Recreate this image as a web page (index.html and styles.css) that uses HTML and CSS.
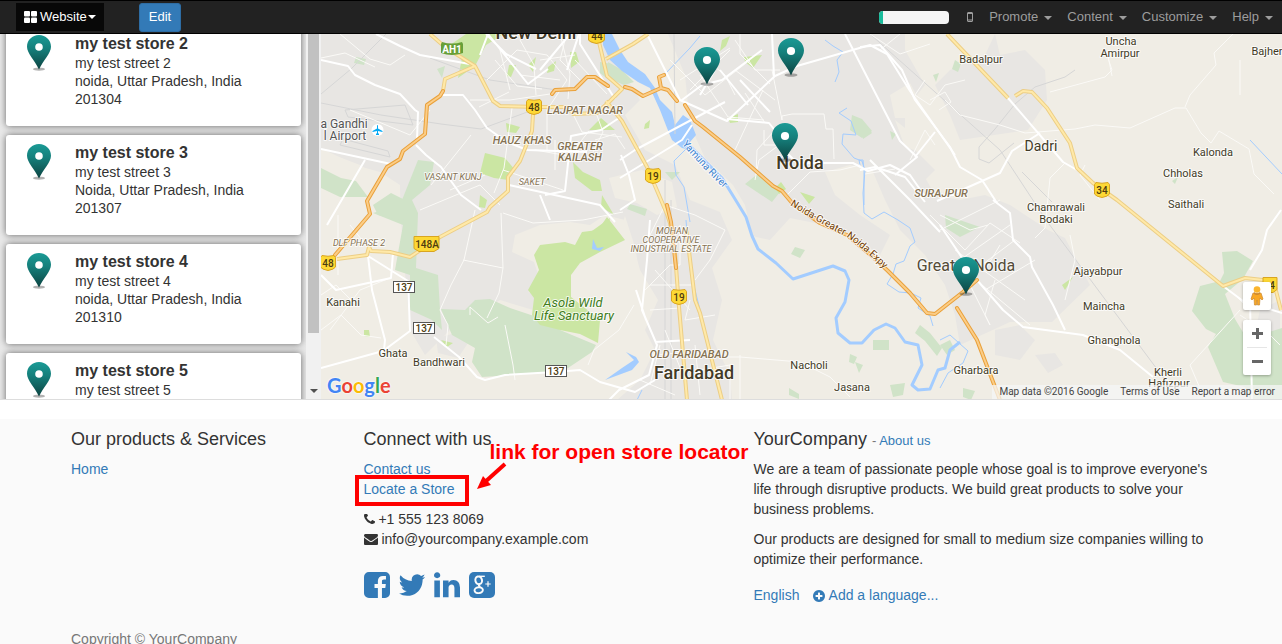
FILE: index.html
```html
<!DOCTYPE html>
<html lang="en">
<head>
<meta charset="utf-8">
<meta name="viewport" content="width=device-width, initial-scale=1">
<title>Store Locator | YourCompany</title>
<link rel="stylesheet" href="styles.css">
</head>
<body>
<svg class="sprite" aria-hidden="true">
  <defs>
    <linearGradient id="pin-fill" x1="0" y1="0" x2="0" y2="1">
      <stop offset="0" stop-color="#1a9a95"/><stop offset=".4" stop-color="#157f7b"/><stop offset="1" stop-color="#0c4341"/>
    </linearGradient>
    <symbol id="pin" viewBox="0 0 26 39">
      <ellipse cx="13" cy="37" rx="6.5" ry="1.7" fill="#000" opacity=".3"/>
      <path fill="url(#pin-fill)" d="M13 0C5.6 0 0 5.6 0 12.6 0 20 8.5 27 13 37.4 17.500 27 26 20 26 12.600 26 5.600 20.400 0 13 0z"/>
      <circle cx="13" cy="13" r="4.100" fill="#fff"/>
    </symbol>
    <symbol id="caret" viewBox="0 0 8 4"><path fill="currentColor" d="M0 0h8L4 4z"/></symbol>
  </defs>
</svg>

<header class="navbar">
  <button class="nav-site" type="button">
    <svg width="13" height="12" viewBox="0 0 13 12" aria-hidden="true"><g fill="#fff"><rect width="6" height="5.500" rx="1"/><rect x="7" width="6" height="5.500" rx="1"/><rect y="6.500" width="6" height="5.500" rx="1"/><rect x="7" y="6.500" width="6" height="5.500" rx="1"/></g></svg>
    <span>Website</span><svg class="caret" aria-hidden="true"><use href="#caret"/></svg>
  </button>
  <button class="nav-edit" type="button">Edit</button>
  <div class="progress" role="progressbar" aria-label="Setup progress" aria-valuenow="5"><div class="progress-bar" style="width:5%"></div></div>
  <button class="nav-item" type="button" aria-label="Mobile preview"><svg width="6" height="10" viewBox="0 0 6 10"><path fill="none" stroke="#9d9d9d" d="M1 .5h4q.5 0 .5.5v8q0 .5-.5.5H1q-.5 0-.5-.5V1q0-.5.5-.5zM.5 8h5M.5 1.500h5"/></svg></button>
  <nav class="nav-menu">
    <button class="nav-item" type="button">Promote<svg class="caret" aria-hidden="true"><use href="#caret"/></svg></button>
    <button class="nav-item" type="button">Content<svg class="caret" aria-hidden="true"><use href="#caret"/></svg></button>
    <button class="nav-item" type="button">Customize<svg class="caret" aria-hidden="true"><use href="#caret"/></svg></button>
    <button class="nav-item" type="button">Help<svg class="caret" aria-hidden="true"><use href="#caret"/></svg></button>
  </nav>
</header>

<main class="locator">
  <aside class="sidebar">
    <ul class="stores">
      <li class="store"><svg class="store-pin" aria-hidden="true"><use href="#pin"/></svg><div><h3>my test store 2</h3><p>my test street 2<br>noida, Uttar Pradesh, India<br>201304</p></div></li>
      <li class="store"><svg class="store-pin" aria-hidden="true"><use href="#pin"/></svg><div><h3>my test store 3</h3><p>my test street 3<br>Noida, Uttar Pradesh, India<br>201307</p></div></li>
      <li class="store"><svg class="store-pin" aria-hidden="true"><use href="#pin"/></svg><div><h3>my test store 4</h3><p>my test street 4<br>noida, Uttar Pradesh, India<br>201310</p></div></li>
      <li class="store"><svg class="store-pin" aria-hidden="true"><use href="#pin"/></svg><div><h3>my test store 5</h3><p>my test street 5</p></div></li>
    </ul>
    <div class="scrollbar" aria-hidden="true"><div class="thumb"></div><svg class="caret" viewBox="0 0 8 4"><use href="#caret"/></svg></div>
  </aside>

  <div class="map">
    <svg class="map-canvas" viewBox="321 34 961 365" preserveAspectRatio="xMinYMin slice" role="img" aria-label="Map of stores near Noida">
      <defs>
        <g id="highways">
          <path d="M475 66L445 79 443 91M430 34L445 47 475 66 493 101 500 106 540 107 567 107 573 114 597 113 610 101 622 89 607 76 599 42M533 114L532 131 520 161 508 177 508 191 490 207 487 212 440 237 413 255 410 257 390 252 371 251 369 247 367 255 337 259M606 59L633 44 648 34M606 101L622 121 647 167 667 214 670 223 675 253 679 307 687 400M686 228L688 243 695 300 700 313 722 400M947 34L1008 98M1015 96L1023 91 1032 92 1047 108 1070 143 1077 168 1093 183 1117 200 1223 286 1245 278 1263 280 1275 287 1281 310"/>
        </g>
        <g id="expressways">
          <path d="M443 91L440 96 427 105 425 134 403 151 400 159 387 167 367 201 370 214 335 255M552 94L555 90 575 89 587 77 595 77 608 86M625 87L632 89 643 96 661 88 668 90 677 101M664 75L659 77 661 88M685 105L695 121 703 127 740 157 773 186 782 191 793 204 820 223 847 235 873 257 888 271 910 293 927 313 935 314 963 292 977 280M957 308L977 340 1000 400M667 205L671 222 676 268"/>
        </g>
        <path id="expy-label" d="M790 205Q820 224 847 237 869 253 893 278"/>
        <path id="river-label" d="M682 144Q702 168 735 199"/>
        <symbol id="shield" viewBox="0 0 16 16"><path fill="#fdd835" stroke="#d9a521" d="M2 .5Q8 2 14 .5L15.500 2.500V12Q14 14.500 8 15.500 2 14.500 .5 12V2.500z"/></symbol>
      </defs>

      <rect class="land" x="321" y="34" width="961" height="366"/>
      <g class="urban">
        <path d="M321 34H606L625 75 640 100 625 115 645 150 675 165 690 200 720 212 732 240 712 268 722 300 713 340 730 375 732 400H617L640 380 655 350 645 330 658 300 640 270 632 240 625 220 605 215 590 225 570 222 540 225 515 235 512 252 534 262 540 280 528 292 570 310 560 318 500 300 450 330 425 355 410 330 400 215 400 185 380 172 355 165 321 148z"/>
        <path d="M668 34H905L905 50 925 85 905 110 905 140 935 170 915 190 880 170 850 165 825 172 835 195 860 215 890 235 880 255 840 228 790 218 770 240 752 236 745 205 733 185 705 158 690 125 685 75z"/>
        <path d="M995 34L1000 55 1025 50 1045 70 1047 100 1028 130 960 140 950 115 935 85 950 70 985 55z"/>
        <path d="M870 165L915 160 935 195 960 200 985 195 1010 205 1048 230 1065 238 1090 285 1052 322 1010 322 960 345 955 315 945 285 925 255 900 230 885 200z"/>
        <path d="M995 330L1020 325 1035 340 1020 360 995 355zM1035 355l20-2 8 12-15 8zM436 338l20-5 12 10-10 15-20-5zM1260 310l20-10v50l-25-18z"/>
      </g>
      <g class="farm">
        <path d="M625 216L605 275 572 272 571 297 601 312 596 345 640 310 636 250zM321 150L360 165 400 190 402 240 370 245 321 240zM642 170l30 12 5 25-20 8-20-12-22-5-6-20z"/>
        <path d="M642 34h20l10 22-5 18-15-12zM890 95l20-12 8 15-8 20-15 0zM895 120l15 12 10 20-15-5z"/>
      </g>
      <g class="forest">
        <path d="M373 213L400 205 418 160 434 162 430 185 412 200 418 213 416 268 438 275 440 310 442 330 432 320 410 310 410 275 395 270 403 225z"/>
        <path d="M441 309L465 310 475 300 490 299 510 308 552 322 560 330 596 345 592 352 565 370 515 375 482 377 472 362 475 348 452 335z"/>
        <path d="M321 168l20 10 15 3 12 16-28 0-19-9zM373 205l18-12 20 10-8 18-25-6z"/>
        <path d="M1222 252l15 -1 16 10-10 18-18 15 10 25 12 20 38 -12 v90l-30-5-10-25-22-5-15-35 8-13-10-5 -14-18 8-25 20-5 4-8z"/>
        <path d="M945 215l35 12-20 10-14-9zM852 115l10 4 10 12-10 7-12-8zM860 118l12 15-9 6zM795 247l10 3-5 8-9-4zM873 340h16v10h-16zM920 325l10 8 12 15-5 8-12-15-10-8zM890 385l15-2-2 12-10 2zM850 354l7 3-3 7-5-2zM855 362l8 3-4 8zM789 388l10 6v5l-10-4zM940 345l10-5 5 10-8 5zM963 388l12 3-4 9-8-3z"/>
        <path d="M600 62l12 2 12 12-14 5-10-8zM356 57l10 2-2 6-10-2zM437 69l8-3-3 12zM665 172l15 0-8 8zM630 204l17 5-2 7-18-7zM745 184l15-12 20 20-8 10zM1172 181l6-4-3 7zM890 131l6 3-4 6zM955 60l6 4-3 8-6-3zM933 75l6-2-3 9zM608 62l14 8 12 12-10 3-14-6z"/>
      </g>
      <g class="park">
        <path d="M466 34H504L486 45 475 66 458 78 462 58 450 45z"/>
        <path d="M485 153L505 158 515 170 508 180 494 178 480 173zM573 162L583 172 600 180 602 191 592 191 575 178zM509 65l7 0-5 12-4-1zM570 52h6l3 10-8 6zM548 67l8-6-2 10-7 2zM480 195l7 5-2 8-6-1zM506 123l14 4-4 6-9-1zM602 195l12 20-13-8zM615 130h-26l12 -12zM744 57l18-2-9 13-8-6zM722 40l8-4-4 10-6 5zM728 118l10-4v8l-8 1zM775 188l6-6 5 7-7 5zM800 192l15 5-6 7zM528 65l8-8-3 15zM610 218l-5 20 -20 -2zM1062 285l11-8-8 13zM645 124l5-4-1 8-5 1z"/>
        <path d="M607 217L625 240 600 252 580 263 571 275 571 297 600 320 598 343 580 334 560 330 540 325 532 315 534 298 528 290 539 270 534 255 540 245 565 242 575 245 582 232 598 230z"/>
        <path d="M441 340l12 3-6 4zM364 330l5 0 1 7-6-1z"/>
      </g>
      <g class="water">
        <path d="M603 34L612 34 620 50 628 62 645 74 655 88 660 100 672 112 675 125 683 115 690 120 696 135 690 142 690 150 682 148 672 140 667 128 660 110 650 88 638 82 622 71 610 60 603 45z"/>
        <path d="M593 239l4 9 7 -1-4 4-8-2zM636 398l1-1zM605 380L622 368 634 360 626 352 636 357 639 362 632 370z"/>
        <path class="river" d="M684 142L690 146 722 178 735 199 746 217 752 236 758 249 776 263 793 279 833 266 845 271 849 280 845 302 836 318 838 333 850 343 862 343 874 330 886 324 895 328 905 342 918 345 922 365 912 385 918 390 930 389 938 370 945 368 950 350 960 342"/>
        <path class="stream" d="M700 36L690 48 665 74M690 145l-16 16 2 14 8 12 6 35M686 220l4 50 15 60 14 60M847 108l-8 5 12 8 5 14-13-1-1 10 12 14 8 3 3 10-2 22 1 20 8 6 12-7 14 8 12 8 5 14-5 4-6 15-8 3-3 10-6 10 12 8 12 1 10 5-3 10 12 8 3 10M835 82l4-10-2-12 6-8-10-6-8-6M1250 140l32 34M637 400l5-10M940 340l10-5 18 16-5 12-15 10-8 15M860 165l-1-5 4 0 1 10 0 35"/>
      </g>
      <g class="rail">
        <path d="M870 34L1000 150 1046 220 1180 400M1075 70l-10 7-30 10-20 17-20 25-16 18 0 12 10 4 25-20M321 94l30-25 40-40M321 103l60 12 60 9 40 5 60-22M674 34l1 100M785 200M665 180v220M671 200v200M1022 172l30 30M430 58l60 22 80 12M345 110l60 -5 8 20-65-8zM340 145l50 12-2-6-45-12z"/>
      </g>
      <g class="lane">
        <path d="M321 58l24 -5 30 14M340 34l30 25 20 6 15-10M350 110l60 25 20 -25M471 135l-40 50M512 108l-8 60-10 25M503 170l60 20M495 60l22 26 25 3M487 80l30-30 30 5 20 25 -20 30 0 40M520 40l14 25 2 30M565 40l-5 20 20 20M560 34l10 40-2 25M575 60l32 34M535 150l34 6 20 -25M479 107l30-15M470 100l40 0 40-6M540 60l35-5M520 75l40 5M500 50l10 40M572 112l10 20 40 5M555 140l0 30M595 110l8 22-10 20M595 140l20 -6 10 15M420 210l60 -25 20 20M450 190l35 -15M475 210l-11 50-13 25-11 25 8 15 -2 20M463 260l40 8 -4 25-12 25M503 268l-2-55M503 213l30 10 50-3 40-8M470 315l0-8 18 16 10 -6M505 325l8 40 2 15M321 295l15-10 20 20M321 330l20-15 20 20 20 3M338 215v60M350 225l20 25M330 330l30 -40 30-12M588 365l6-15 25-20 15-25"/>
        <path d="M670 60l35 35 45 -35M700 75l28 42 36 3M690 90l40-40M680 80l50-32M740 34v20l30 30M772 70l10 50 0 -4 10-2 32 0 2 15 7 0 1 30M764 130v15l15 0-20 15-4 20M763 90l-28 60M735 40l20 30 25 0M735 70l40 30M785 170M745 93l20 30M700 55l25 20 10 20M775 130l-18 20 -1 25M860 165l-20 5-30 2-25 25M895 169l-30 5M880 50l20 -16M870 34l30 20 30 -10M935 145l-10 -15 -15 30M930 100l15-8 6 10-12 8M925 80l-10 15 15 10 15-20 20-5M945 100l15 15 40 10 25 8 50-4 20-4 35 3 45-20 11 0 15 25 10 10 8-12 30 18 5 25 20 20M1112 76l-5-25M1050 92l55-15 7-7-5-15M1185 107l5-12 26-30-2-12 20-20M1240 60v35M1065 163l-15 15-5 50-10 10"/>
        <path d="M940 230l60-30M930 215l35 35 25-27 30 20M955 250l70 50M960 260l50-35M975 270l40-30M985 290l50-30M970 275l60 50M950 265l20 20 20 40M995 280l-10 35 5 10M1000 245l-15 25M940 215l30 15 18 -5M1070 235l5 25-10 40M1190 365l50-55M1190 365l15 35M1240 315l30 20 10 10M1250 310l-15-15M1100 200l-20 -25 5-10M650 235l15-30 30 10 30 15-15 30-15 20M650 285l45 0M645 290l25-25 10 0 0 -40M650 310l30-2M690 300l-5 20 30-5M655 355l35-3 30 5 20 0 60 5 30 15 20 20M740 355v45M700 370l30 -5M640 380l35 15M660 345l-10 40M665 330l20 50M695 345l5 50M730 365v35M655 270l35 40"/>
      </g>
      <g class="street">
        <path d="M321 60L348 66 355 75 375 85 400 94 415 110 418 112 417 140M376 34L400 46 420 55 475 65M443 95l20 0 12 15 12 18 20 14 20 8 60 2M321 149l70 15M365 160l-38 65M416 145l10 10 15 12 20 28 20 15M509 185L600 205 615 222M545 195l20-4 6-55 30-6 18-12M580 34v10l35 55M567 70l15 -45M540 70l30-36M480 55l8-21 40 50 20-15M486 34l20 20 30 15M540 195l10 25"/>
        <path d="M368 256L372 290 385 340 384 350M368 256l40 25 2 50-27 20-62 17M321 275l15 15 55-12 2-25M434 337l25 20 18 20 8 3 20-5 50-3 25-2 20 12 35 10 20-12M650 220l-3 40-5 50 15 35-8 30-30 15-20 20M620 210l15 -10 -6-25-8-20M620 160l15-10 90-48M655 342l35-2M636 290l10 30"/>
        <path d="M647 34L680 100 727 121 775 76 797 66 870 45 887 54 910 91 955 155M727 119l42 4 8 10 10 20 10 10 56 0 15 8 22-6 20 10 14 20 30 0M692 125l-10 15-62 38M682 100l20-15 20-5 40 -30M700 95l15-25M720 70l28 35M740 80l30 32M774 76l-2 -42"/>
        <path d="M845 34L900 141 917 157 895 175M860 47L880 45 902 70 915 100 950 147 960 167 982 180 997 203M1008 98L1063 162 1077 170M1040 133l-28 18-12 22-18 8-45 20M860 170l15-3 30 10 20 25M915 157l20 -25"/>
        <path class="main" d="M993 200L1010 213 1013 240 1030 257 1032 267 1053 305 1065 330M940 225l37 55 26 30 20 17 60 8 37 15 33 27M1223 286l20 15 39 12M1281 210l-14 20-5 20-12 20M1250 300l2 100M870 160l40 40 30 32"/>
      </g>
      <use class="hw-case" href="#highways"/><use class="hw" href="#highways"/>
      <use class="ex-case" href="#expressways"/><use class="ex" href="#expressways"/>

      <g class="signs">
        <path fill="#689f38" d="M442 42q10 3 20 0l1 2v9q-11 4-22 0v-9z"/><text class="sign-light" x="452" y="53">AH1</text>
        <use href="#shield" x="588" y="27" width="17" height="17"/><text x="597" y="40">44</text>
        <use href="#shield" x="526" y="99" width="16" height="16"/><text x="534" y="111">48</text>
        <use href="#shield" x="645" y="168" width="16" height="16"/><text x="653" y="180">19</text>
        <use href="#shield" x="671" y="289" width="16" height="16"/><text x="679" y="301">19</text>
        <use href="#shield" x="1094" y="182" width="16" height="16"/><text x="1102" y="194">34</text>
        <use href="#shield" x="320" y="255" width="16" height="16"/><text x="328" y="267">48</text>
        <path fill="#fdd835" stroke="#d9a521" d="M414 236.500h25v12l-5 3h-15l-5-3zM1263 277.500h14v12l-4 3h-10z"/><text x="427" y="248">148A</text><text x="1272" y="289">4</text>
        <g fill="#fff" stroke="#555"><rect x="393.500" y="281.500" width="21" height="11"/><rect x="413.500" y="322.500" width="21" height="11"/><rect x="545.500" y="365.500" width="21" height="11"/></g>
        <text x="404" y="291">137</text><text x="424" y="332">137</text><text x="556" y="375">137</text>
      </g>

      <g class="labels">
        <text class="city" x="536" y="39">New Delhi</text><text class="city" x="800" y="169">Noida</text><text class="city" x="694" y="379">Faridabad</text>
        <text class="suburb-city" x="966" y="271">Greater Noida</text><text class="town" x="1041" y="151">Dadri</text>
        <text class="place" x="344" y="128">a Gandhi</text><text class="place" x="345" y="140">l Airport</text>
        <g class="village"><text x="981" y="63">Badalpur</text><text x="1121" y="45">Uncha</text><text x="1120" y="57">Amirpur</text><text x="1267" y="55">Bajher</text><text x="1213" y="156">Kalonda</text><text x="1183" y="177">Chholas</text><text x="1186" y="208">Saithali</text><text x="1056" y="211">Chamrawali</text><text x="1056" y="223">Bodaki</text><text x="1098" y="275">Ajayabpur</text><text x="1104" y="310">Maincha</text><text x="1114" y="344">Ghanghola</text><text x="976" y="374">Gharbara</text><text x="1168" y="376">Kherli</text><text x="1169" y="387">Hafizpur</text><text x="809" y="369">Nacholi</text><text x="852" y="391">Jasana</text><text x="343" y="306">Kanahi</text><text x="393" y="357">Ghata</text><text x="439" y="366">Bandhwari</text></g>
        <g class="area"><text x="585" y="114">LAJPAT NAGAR</text><text x="522" y="144">HAUZ KHAS</text><text x="580" y="150">GREATER</text><text x="580" y="161">KAILASH</text><text x="941" y="197">SURAJPUR</text><text x="689" y="358">OLD FARIDABAD</text></g>
        <g class="area small"><text x="453" y="180">VASANT KUNJ</text><text x="532" y="185">SAKET</text><text x="359" y="246">DLF PHASE 2</text><text x="672" y="234">MOHAN</text><text x="671" y="243">COOPERATIVE</text><text x="671" y="252">INDUSTRIAL ESTATE</text></g>
        <g class="reserve"><text x="573" y="307">Asola Wild</text><text x="574" y="320">Life Sanctuary</text></g>
        <text class="river-name"><textPath href="#river-label">Yamuna River</textPath></text>
        <text class="road-name"><textPath href="#expy-label">Noida-Greater Noida Expy</textPath></text>
      </g>
      <circle cx="377.500" cy="130" r="6" fill="#fff"/><path fill="#03a9f4" d="M377 125.500q.5-1 1 0v3l4.500 2.500v1l-4.500-1v2l1 1v1h-3v-1l1-1v-2l-4.500 1v-1l4.500-2.500z"/>

      <use href="#pin" x="694" y="47" width="26" height="39"/><use href="#pin" x="778" y="38" width="26" height="39"/><use href="#pin" x="772" y="123" width="26" height="39"/><use href="#pin" x="953" y="257" width="26" height="39"/>
    </svg>
    <a class="google" href="#" aria-label="Google"><span class="g-blue">G</span><span class="g-red">o</span><span class="g-yellow">o</span><span class="g-blue">g</span><span class="g-green">l</span><span class="g-red">e</span></a>
    <div class="map-controls">
      <button class="pegman" type="button" aria-label="Street View"><svg width="14" height="20" viewBox="0 0 14 20"><circle cx="7" cy="3.500" r="3.300" fill="#fbb52d"/><path fill="#f9a825" stroke="#c98a35" stroke-width=".7" d="M3 7q4 1 8 0l2 6-1 1-2-2-.5 7h-2L7 14l-.5 5h-2L4 12l-2 2-1-1z"/><path fill="#d08a2e" d="M4 6q3 3 6 0v2q-3 2-6 0z"/></svg></button>
      <div class="zoom"><button type="button" aria-label="Zoom in"><svg width="11" height="11" viewBox="0 0 11 11"><path fill="#666" d="M4 0h3v4h4v3H7v4H4V7H0V4h4z"/></svg></button><button type="button" aria-label="Zoom out"><svg width="11" height="11" viewBox="0 0 11 11"><path fill="#666" d="M0 4h11v3H0z"/></svg></button></div>
    </div>
    <div class="map-legal"><span>Map data ©2016 Google</span><a href="#">Terms of Use</a><a href="#">Report a map error</a></div>
  </div>
</main>

<footer class="footer">
  <div class="container">
    <section>
      <h4>Our products &amp; Services</h4>
      <ul><li><a href="#">Home</a></li></ul>
    </section>
    <section class="connect">
      <h4>Connect with us</h4>
      <ul><li><a href="#">Contact us</a></li><li><a class="marked" href="#">Locate a Store</a></li></ul>
      <ul>
        <li><svg class="phone" viewBox="192 256 1408 1408" aria-hidden="true"><path fill="currentColor" d="M1600 1240q0 27-10 70.500t-21 68.500q-21 50-122 106-94 51-186 51-27 0-53-3.500t-57.500-12.500-47-14.500-55.500-20.500-49-18q-98-35-175-83-127-79-264-216t-216-264q-48-77-83-175-3-9-18-49t-20.500-55.500-14.500-47-12.500-57.500-3.500-53q0-92 51-186 56-101 106-122 25-11 68.500-21t70.500-10q14 0 21 3 18 6 53 76 11 19 30 54t35 63.500 31 53.500q3 4 17.500 25t21.500 35.500 7 28.500q0 20-28.500 50t-62 55-62 53-28.500 46q0 9 5 22.500t8.500 20.500 14 24 11.500 19q76 137 174 235t235 174q2 1 19 11.500t24 14 20.500 8.500 22.500 5q18 0 46-28.500t53-62 55-62 50-28.500q14 0 28.500 7t35.500 21.500 25 17.500q25 15 53.500 31t63.500 35 54 30q70 35 76 53 3 7 3 21z"/></svg> +1 555 123 8069</li>
        <li><svg class="mail" viewBox="0 256 1792 1408" aria-hidden="true"><path fill="currentColor" d="M1792 710v794q0 66-47 113t-113 47h-1472q-66 0-113-47t-47-113v-794q44 49 101 87 362 246 497 345 57 42 92.500 65.500t94.500 48 110 24.500h2q51 0 110-24.500t94.500-48 92.500-65.500q170-123 498-345 57-39 100-87zm0-294q0 79-49 151t-122 123q-376 261-468 325-10 7-42.500 31t-54 38.500-52 32.500-57.500 27-50 9h-2q-23 0-50-9t-57.500-27-52-32.500-54-38.500-42.500-31q-91-64-262-182.500t-205-142.500q-62-42-117-115.500t-55-136.500q0-78 41.500-130t118.500-52h1472q65 0 112.500 47t47.500 113z"/></svg> info@yourcompany.example.com</li>
      </ul>
      <div class="social">
        <a href="#" aria-label="Facebook"><svg viewBox="128 128 1536 1536"><path fill="currentColor" d="M1376 128q119 0 203.500 84.500t84.500 203.500v960q0 119-84.500 203.500t-203.500 84.500h-188v-595h199l30-232h-229v-148q0-56 23.500-84t91.500-28l122-1v-207q-63-9-178-9-136 0-217.500 80t-81.500 226v171h-200v232h200v595h-532q-119 0-203.500-84.500t-84.500-203.500v-960q0-119 84.500-203.500t203.500-84.500h960z"/></svg></a>
        <a href="#" aria-label="Twitter"><svg viewBox="128 128 1536 1536"><path fill="currentColor" d="M1684 408q-67 98-162 167 1 14 1 42 0 130-38 259.500t-115.500 248.500-184.500 210.500-258 146-323 54.500q-271 0-496-145 35 4 78 4 225 0 401-138-105-2-188-64.500t-114-159.500q33 5 61 5 43 0 85-11-112-23-185.500-111.500t-73.500-205.500v-4q68 38 146 41-66-44-105-115t-39-154q0-88 44-163 121 149 294.500 238.500t371.500 99.500q-8-38-8-74 0-134 94.500-228.500t228.500-94.500q140 0 236 102 109-21 205-78-37 115-142 178 93-10 186-50z"/></svg></a>
        <a href="#" aria-label="LinkedIn"><svg viewBox="128 128 1536 1536"><path fill="currentColor" d="M477 625v991h-330v-991h330zm21-306q1 73-50.500 122t-135.500 49h-2q-82 0-132-49t-50-122q0-74 51.500-122.500t134.500-48.500 133 48.500 51 122.500zm1166 729v568h-329v-530q0-105-40.500-164.500t-126.500-59.500q-63 0-105.500 34.500t-63.500 85.500q-11 30-11 81v553h-329q2-399 2-647t-1-296l-1-48h329v144h-2q20-32 41-56t56.500-52 87-43.500 114.500-15.500q171 0 275 113.500t104 332.500z"/></svg></a>
        <a href="#" aria-label="Google Plus"><svg viewBox="0 0 26 26"><rect width="26" height="26" rx="5" fill="currentColor"/><g fill="none" stroke="#fafafa"><ellipse cx="9.700" cy="8.300" rx="3.300" ry="3.900" stroke-width="2" transform="rotate(-15 9.700 8.300)"/><path stroke-width="1.400" d="M10 4.300h5.800"/><path stroke-width="2" d="M10.500 12q-1.500 1.500.8 2.800"/><ellipse cx="9.700" cy="18.200" rx="4.200" ry="2.900" stroke-width="1.900" transform="rotate(-6 9.700 18.200)"/><path stroke-width="1.200" d="M19 9.300v5.400M16.300 12h5.400"/></g></svg></a>
      </div>
      <div class="note"><span>link for open store locator</span><svg width="30" height="28" viewBox="0 0 30 28" aria-hidden="true"><path stroke="#f00" stroke-width="4" d="M28 2L8 20"/><path fill="#f00" d="M0 27L6 14 14 23z"/></svg></div>
    </section>
    <section>
      <h4>YourCompany <small>- <a href="#">About us</a></small></h4>
      <p>We are a team of passionate people whose goal is to improve everyone's life through disruptive products. We build great products to solve your business problems.</p>
      <p>Our products are designed for small to medium size companies willing to optimize their performance.</p>
      <div class="languages"><a href="#">English</a><a href="#"><svg class="plus" viewBox="128 128 1536 1536" aria-hidden="true"><path fill="currentColor" d="M1344 960v-128q0-26-19-45t-45-19h-256v-256q0-26-19-45t-45-19h-128q-26 0-45 19t-19 45v256h-256q-26 0-45 19t-19 45v128q0 26 19 45t45 19h256v256q0 26 19 45t45 19h128q26 0 45-19t19-45v-256h256q26 0 45-19t19-45zm320-64q0 209-103 385.500t-279.500 279.500-385.500 103-385.500-103-279.500-279.500-103-385.500 103-385.500 279.500-279.500 385.500-103 385.500 103 279.500 279.500 103 385.500z"/></svg> Add a language...</a></div>
    </section>
    <p class="copyright">Copyright © YourCompany</p>
  </div>
</footer>
</body>
</html>
```

FILE: styles.css
```css
* { box-sizing: border-box; }
html { scrollbar-width: none; }
body { margin: 0; background: #fff; color: #333; font: 14px/20px "Liberation Sans", Arial, sans-serif; }
h3, h4, p, ul { margin: 0; padding: 0; }
ul { list-style: none; }
button { border: 0; background: none; padding: 0; font: inherit; color: inherit; }
a { color: #337ab7; text-decoration: none; }
.sprite { position: absolute; width: 0; height: 0; }
.caret { width: 8px; height: 4px; }

/* Top bar */
.navbar { display: flex; align-items: center; min-height: 34px; padding: 0 9px 0 16px; border: 1px solid #000; border-width: 1px 0; background: #222; color: #9d9d9d; font-size: 13px; line-height: 18px; }
.nav-site { display: flex; align-items: center; gap: 3px; height: 28px; padding: 0 8px; background: #080808; color: #fff; }
.nav-site .caret { margin-left: -2px; }
.nav-edit { margin-left: 35px; height: 29px; padding: 0 9px; border: 1px solid #2e6da4; border-radius: 3px; background: #337ab7; color: #fff; }
.progress { width: 70px; height: 13px; margin: 0 18px 0 auto; border-radius: 4px; overflow: hidden; background: #f5f5f5; }
.progress-bar { height: 100%; background: #1abc9c; }
.nav-menu { display: flex; gap: 15px; margin-left: 16px; }
.nav-item { display: flex; align-items: center; gap: 6px; }
.nav-item .caret { margin-top: 2px; }

/* Store list */
.locator { display: flex; height: 366px; border-bottom: 1px solid #ddd; }
.sidebar { display: flex; flex: none; width: 321px; overflow: hidden; background: #e9e9e9; }
.stores { flex: 1; margin-top: -8px; padding: 0 5px 0 6px; display: flex; flex-direction: column; gap: 9px; }
.store { display: flex; flex: none; gap: 23px; min-height: 100px; padding: 9px 20px; border-radius: 3px; background: #fff; box-shadow: 0 0 7px #666; }
.store-pin { width: 26px; height: 36px; }
.store h3 { font-size: 16px; line-height: 18px; margin-bottom: 1px; }
.store p { line-height: 18px; }
.scrollbar { display: flex; flex-direction: column; align-items: center; justify-content: space-between; width: 15px; padding-bottom: 6px; background: #f1f1f1; color: #505050; }
.thumb { width: 11px; height: 299px; background: #c1c1c1; }

/* Map */
.map { position: relative; flex: 1; min-width: 0; overflow: hidden; font-family: Roboto, sans-serif; }
.map-canvas { display: block; width: 100%; height: 100%; }
.land { fill: #f0ede5; }
.urban { fill: #e8e6e3; }
.farm { fill: #f0ede5; }
.forest { fill: #d0e3c8; }
.park { fill: #cbe6a3; }
.water { fill: #a3ccff; }
.river, .stream { fill: none; stroke: #a3ccff; stroke-width: 3; stroke-linejoin: round; }
.stream { stroke-width: 1; }
.rail { fill: none; stroke: #d6d6d6; }
.lane { fill: none; stroke: #fbfaf7; }
.street { fill: none; stroke: #fff; stroke-width: 2; stroke-linejoin: round; }
.main { stroke-width: 2; }
.hw-case, .hw, .ex-case, .ex { fill: none; stroke-linejoin: round; }
.hw-case { stroke: #ecce86; stroke-width: 4; }
.hw { stroke: #ffe9a8; stroke-width: 2; }
.ex-case { stroke: #e9a03a; stroke-width: 4; stroke-linecap: round; }
.ex { stroke: #fbcd87; stroke-width: 2; stroke-linecap: round; }
.signs text { font-size: 10px; font-weight: 500; text-anchor: middle; fill: #4d3b10; }
.signs .sign-light { fill: #fff; font-weight: 700; }
.labels text { text-anchor: middle; fill: #423a26; stroke: #fff; stroke-width: 2px; stroke-opacity: .75; stroke-linejoin: round; paint-order: stroke; }
.labels .city { font-size: 18px; font-weight: 500; }
.labels .suburb-city { font-size: 16px; fill: #544b37; }
.labels .town { font-size: 14px; }
.labels .place { font-size: 12px; fill: #555; }
.village { font-size: 11px; }
.area { font-size: 11px; font-style: italic; font-weight: 500; }
.small { font-size: 9px; font-weight: 400; }
.labels .area text { fill: #857252; }
.reserve { font-size: 13px; font-style: italic; }
.labels .reserve text { fill: #3f7d1c; }
.labels .river-name { font-size: 10px; text-anchor: start; fill: #3c82cf; }
.labels .road-name { font-size: 10px; text-anchor: start; fill: #6f3b00; }
.google { position: absolute; left: 6px; bottom: 1px; font: 20px/26px Lato, sans-serif; font-weight: 700; text-shadow: 0 0 2px #fff, 0 0 2px #fff; }
.g-blue { color: #4285f4; }
.g-red { color: #ea4335; }
.g-yellow { color: #fbbc05; }
.g-green { color: #34a853; }
.map-controls { position: absolute; right: 11px; bottom: 24px; display: grid; gap: 10px; width: 28px; }
.pegman, .zoom { border-radius: 2px; background: #fff; box-shadow: 0 1px 3px rgba(0, 0, 0, .3); }
.pegman { display: grid; place-items: center; height: 28px; }
.zoom { display: grid; padding: 0 4px; }
.zoom button { display: grid; place-items: center; height: 27px; }
.zoom button + button { height: 28px; border-top: 1px solid #e6e6e6; }
.map-legal { position: absolute; right: 0; bottom: 0; display: flex; gap: 12px; padding: 0 7px; background: rgba(245, 245, 245, .75); color: #444; font-size: 10px; line-height: 14px; }
.map-legal a { color: #444; }

/* Footer */
.footer { margin-top: 19px; background: #fafafa; }
.container { display: grid; grid-template-columns: 3fr 4fr 5fr; max-width: 1170px; margin: 0 auto; }
.container > * { padding: 0 15px; }
.footer h4 { margin: 10px 0; font-size: 18px; line-height: 20px; font-weight: 400; }
.footer small { font-size: 13px; line-height: 1; color: #777; }
.footer p, .footer ul { margin-bottom: 10px; }
.connect { position: relative; }
.phone, .mail, .plus { height: 11px; vertical-align: -1px; }
.phone { width: 11px; }
.mail { width: 14px; }
.plus { width: 12px; height: 12px; vertical-align: -2px; }
.social { display: flex; gap: 9px; margin-top: 23px; }
.social svg { display: block; width: 26px; height: 26px; }
.languages { display: flex; gap: 14px; margin-top: 16px; }
.marked { position: relative; }
.marked::after { content: ""; position: absolute; inset: -6px -14px -9px -9px; border: 4px solid #f00; }
.note { position: absolute; left: 141px; top: 21px; color: #f00; font-size: 21px; font-weight: 700; line-height: 24px; white-space: nowrap; }
.note svg { position: absolute; left: -13px; top: 22px; }
.container .copyright { grid-column: 1 / -1; margin-top: 24px; color: #777; }
```
